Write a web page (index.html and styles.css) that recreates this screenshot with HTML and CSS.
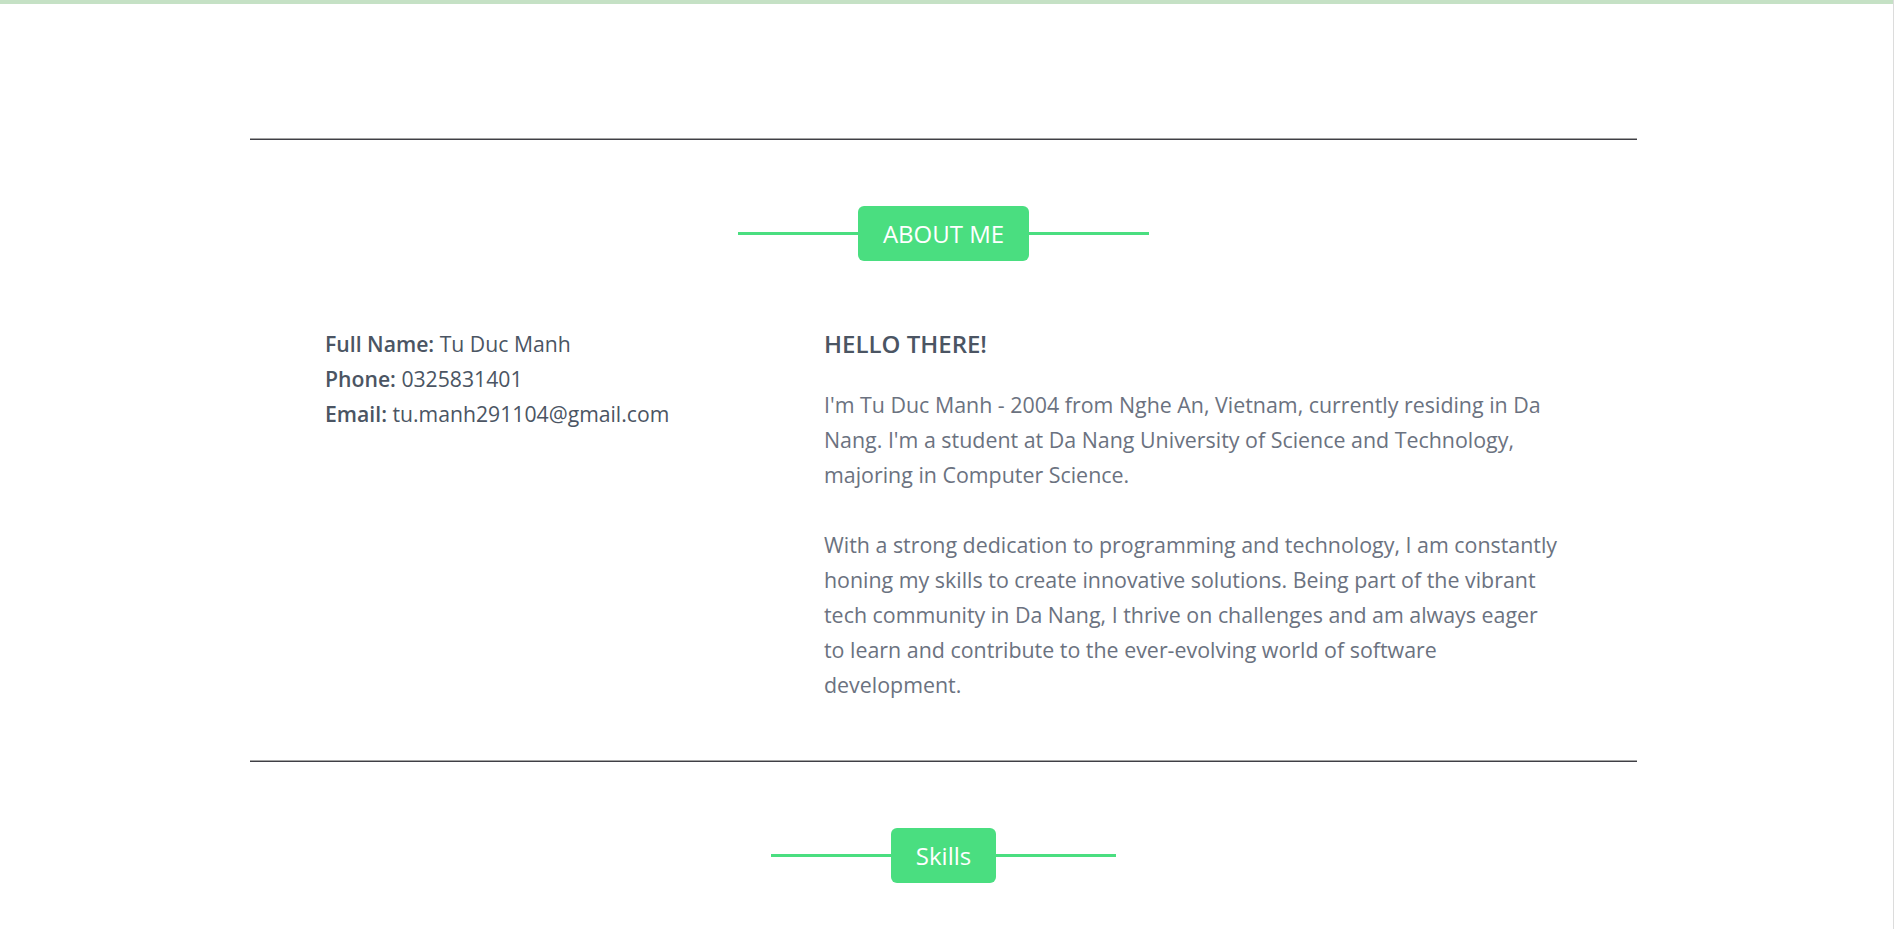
FILE: index.html
```html
<!DOCTYPE html>
<html lang="en">
<head>
<meta charset="utf-8">
<title>Tu Duc Manh</title>
<link rel="stylesheet" href="styles.css">
</head>
<body>
<div class="page">
  <div class="progress"></div>
  <main class="container">
    <section class="section">
      <hr class="divider">
      <div class="section-title">
        <span class="title-line"></span>
        <h2 class="badge">ABOUT ME</h2>
        <span class="title-line"></span>
      </div>
      <div class="about">
        <div class="info">
          <p><strong>Full Name:</strong> Tu Duc Manh</p>
          <p><strong>Phone:</strong> 0325831401</p>
          <p><strong>Email:</strong> tu.manh291104@gmail.com</p>
        </div>
        <div class="bio">
          <h3 class="bio-title">HELLO THERE!</h3>
          <p class="bio-text">I'm Tu Duc Manh - 2004 from Nghe An, Vietnam, currently residing in Da Nang. I'm a student at Da Nang University of Science and Technology, majoring in Computer Science.</p>
          <p class="bio-text spaced">With a strong dedication to programming and technology, I am constantly honing my skills to create innovative solutions. Being part of the vibrant tech community in Da Nang, I thrive on challenges and am always eager to learn and contribute to the ever-evolving world of software development.</p>
        </div>
      </div>
    </section>
    <section class="section">
      <hr class="divider">
      <div class="section-title">
        <span class="title-line"></span>
        <h2 class="badge">Skills</h2>
        <span class="title-line"></span>
      </div>
    </section>
  </main>
</div>
</body>
</html>
```

FILE: styles.css
```css
* {
  box-sizing: border-box;
}

html, body {
  margin: 0;
  padding: 0;
  background: #ffffff;
}

body {
  font-family: "Open Sans", "Noto Sans", sans-serif;
  color: #4b5563;
  overflow: hidden;
}

.page {
  min-height: 100vh;
  border-right: 1px solid #dcdcdc;
}

.progress {
  height: 4px;
  background: #c5e1c5;
}

.container {
  width: 1387px;
  margin-left: 250px;
  padding-top: 134px;
}

.divider {
  margin: 0;
  border: 0;
  border-top: 1px solid #a3a3a3;
  border-bottom: 1px solid #3f3f46;
  height: 2px;
}

.section-title {
  display: flex;
  align-items: center;
  justify-content: center;
  margin-top: 66px;
}

.title-line {
  width: 120px;
  height: 3px;
  background: #4ade80;
}

.badge {
  margin: 0;
  background: #4ade80;
  color: #ffffff;
  font-size: 24px;
  font-weight: 400;
  line-height: 32px;
  padding: 12px 25px 11px;
  border-radius: 6px;
}

.about {
  display: grid;
  grid-template-columns: 499px 736px;
  padding: 0 0 58px 75px;
  margin-top: 65px;
}

.info p {
  margin: 0;
  font-size: 21.2px;
  line-height: 35px;
  color: #4b5563;
}

.info strong {
  font-weight: 600;
}

.bio-title {
  margin: 0 0 26px;
  font-size: 24px;
  line-height: 35px;
  font-weight: 600;
  color: #4b5563;
}

.bio-text {
  margin: 0;
  font-size: 21.4px;
  line-height: 35px;
  color: #6b7280;
}

.bio-text.spaced {
  margin-top: 35px;
}
```
